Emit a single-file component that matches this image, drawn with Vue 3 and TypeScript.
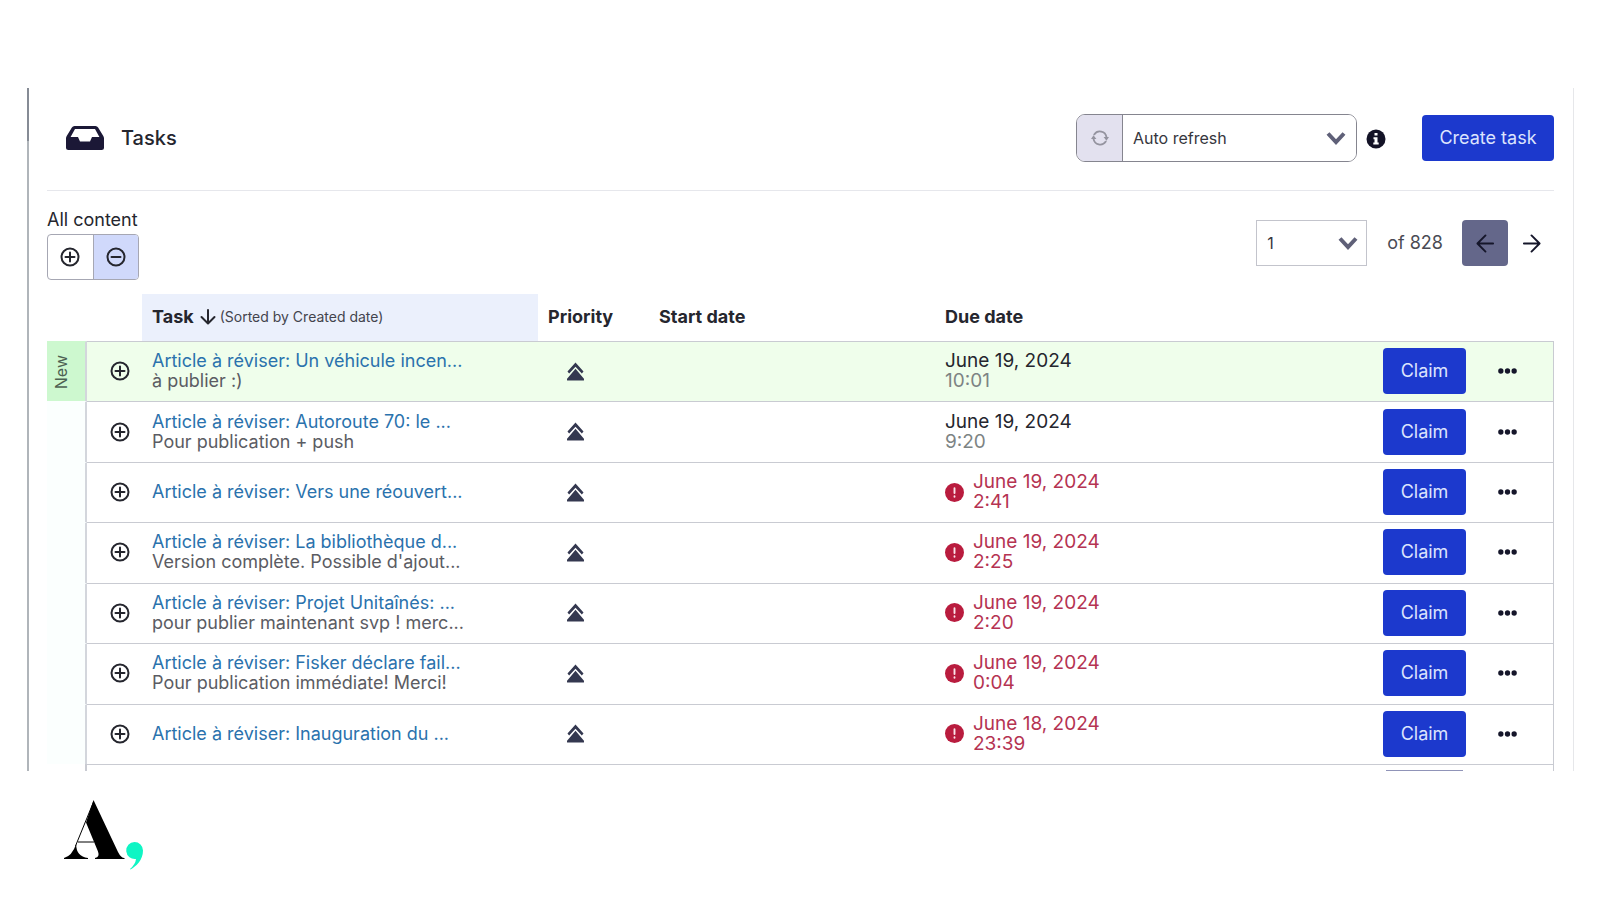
<script setup lang="ts">
import { ref } from 'vue'

interface Task {
  title: string
  note?: string
  date: string
  time: string
  overdue?: boolean
  fresh?: boolean
}

const tasks: Task[] = [
  { title: 'Article à réviser: Un véhicule incen...', note: 'à publier :)', date: 'June 19, 2024', time: '10:01', fresh: true },
  { title: 'Article à réviser: Autoroute 70: le ...', note: 'Pour publication + push', date: 'June 19, 2024', time: '9:20' },
  { title: 'Article à réviser: Vers une réouvert...', date: 'June 19, 2024', time: '2:41', overdue: true },
  { title: 'Article à réviser: La bibliothèque d...', note: "Version complète. Possible d'ajout...", date: 'June 19, 2024', time: '2:25', overdue: true },
  { title: 'Article à réviser: Projet Unitaînés: ...', note: 'pour publier maintenant svp ! merc...', date: 'June 19, 2024', time: '2:20', overdue: true },
  { title: 'Article à réviser: Fisker déclare fail...', note: 'Pour publication immédiate! Merci!', date: 'June 19, 2024', time: '0:04', overdue: true },
  { title: 'Article à réviser: Inauguration du ...', date: 'June 18, 2024', time: '23:39', overdue: true },
]

const refresh = ref('auto')
const page = ref('1')
</script>

<template>
  <main class="screen">
    <section class="panel">
      <header class="head">
        <svg class="inbox" viewBox="0 0 38 24" aria-hidden="true">
          <path fill-rule="evenodd" d="M8.500 0h21a3 3 0 0 1 2.600 1.500l5.200 8.500c.5.9.7 1.700.7 2.600V21.500a2.500 2.500 0 0 1-2.500 2.500h-33A2.500 2.500 0 0 1 0 21.500V12.600c0-.9.2-1.700.7-2.600L5.900 1.500A3 3 0 0 1 8.500 0ZM9 3 4.600 11h7.400l2 4.500h10l2-4.500h7.400L29 3Z" />
        </svg>
        <h1>Tasks</h1>
        <div class="refresh">
          <button type="button" class="refresh-btn" aria-label="Refresh">
            <svg viewBox="0 0 20 20" aria-hidden="true">
              <path class="arc" d="M3.600 6A7.500 7.500 0 0 1 17.200 9M16.400 14A7.500 7.500 0 0 1 2.800 11" />
              <path class="tip" d="M14 9h6l-2.800 4ZM6 11H0l2.800-4Z" />
            </svg>
          </button>
          <div class="pick">
            <select v-model="refresh" aria-label="Refresh mode">
              <option value="auto">Auto refresh</option>
            </select>
            <svg class="chevron" viewBox="0 0 20 14" aria-hidden="true"><path d="M2 2.500l8 8.500 8-8.500" /></svg>
          </div>
        </div>
        <svg class="info" viewBox="0 0 20 20" role="img" aria-label="Information">
          <circle cx="10" cy="10" r="9.500" />
          <path d="M8.500 4h3v2.500h-3zM7.500 8.200h4v5.300h1.200v2H7.300v-2h1.200v-3.300h-1z" />
        </svg>
        <button type="button" class="primary create">Create task</button>
      </header>

      <div class="tools">
        <div class="scope">
          <span id="scope-label">All content</span>
          <div class="toggle" role="group" aria-labelledby="scope-label">
            <button type="button" aria-label="Expand all">
              <svg class="ring" viewBox="0 0 20 20" aria-hidden="true"><circle cx="10" cy="10" r="8.500" /><path d="M10 5.500v9M5.500 10h9" /></svg>
            </button>
            <button type="button" class="on" aria-label="Collapse all">
              <svg class="ring" viewBox="0 0 20 20" aria-hidden="true"><circle cx="10" cy="10" r="8.500" /><path d="M5.500 10h9" /></svg>
            </button>
          </div>
        </div>
        <nav class="pager" aria-label="Pages">
          <div class="pick page">
            <select v-model="page" aria-label="Page">
              <option value="1">1</option>
            </select>
            <svg class="chevron" viewBox="0 0 20 14" aria-hidden="true"><path d="M2 2.500l8 8.500 8-8.500" /></svg>
          </div>
          <span class="total">of 828</span>
          <button type="button" class="prev" aria-label="Previous page">
            <svg viewBox="0 0 20 20" aria-hidden="true"><path d="M18 10H2M10 1.500 1.500 10l8.500 8.500" /></svg>
          </button>
          <button type="button" class="next" aria-label="Next page">
            <svg viewBox="0 0 20 20" aria-hidden="true"><path d="M2 10h16M10 1.500l8.500 8.500-8.500 8.500" /></svg>
          </button>
        </nav>
      </div>

      <table class="grid">
        <colgroup>
          <col class="c-group"><col class="c-expand"><col class="c-task"><col class="c-priority">
          <col class="c-start"><col class="c-due"><col class="c-claim"><col class="c-more">
        </colgroup>
        <thead>
          <tr>
            <td></td>
            <td></td>
            <th scope="col" class="sorted">
              <div class="sort">
                <span>Task</span>
                <svg viewBox="0 0 16 16" aria-hidden="true"><path d="M8 1v13M1.500 8 8 14.500 14.500 8" /></svg>
                <small>(Sorted by Created date)</small>
              </div>
            </th>
            <th scope="col">Priority</th>
            <th scope="col">Start date</th>
            <th scope="col">Due date</th>
            <td></td>
            <td></td>
          </tr>
        </thead>
        <tbody>
          <tr v-for="task in tasks" :key="task.title" :class="{ fresh: task.fresh }">
            <td class="group"><span v-if="task.fresh">New</span></td>
            <td class="expand">
              <button type="button" aria-label="Expand">
                <svg class="ring" viewBox="0 0 20 20" aria-hidden="true"><circle cx="10" cy="10" r="8.500" /><path d="M10 5.500v9M5.500 10h9" /></svg>
              </button>
            </td>
            <td>
              <a href="#">{{ task.title }}</a>
              <p v-if="task.note">{{ task.note }}</p>
            </td>
            <td class="priority">
              <svg viewBox="0 0 18 20" role="img" aria-label="High priority">
                <path d="M9 .5 17.500 10l-1.800 2L9 5 2.300 12 .5 10Z" />
                <path d="M9 7 17.700 17.500a1 1 0 0 1-.8 2H1.100a1 1 0 0 1-.8-2Z" />
              </svg>
            </td>
            <td></td>
            <td>
              <div class="due" :class="{ late: task.overdue }">
                <svg v-if="task.overdue" viewBox="0 0 20 20" role="img" aria-label="Overdue">
                  <circle cx="10" cy="10" r="10" /><path d="M10 5.500v5M10 14v.5" />
                </svg>
                <time><span>{{ task.date }}</span><span class="hour">{{ task.time }}</span></time>
              </div>
            </td>
            <td class="act"><button type="button" class="primary claim">Claim</button></td>
            <td class="more">
              <button type="button" aria-label="More actions">
                <svg viewBox="0 0 20 6" aria-hidden="true"><circle cx="3" cy="3" r="2.800" /><circle cx="10" cy="3" r="2.800" /><circle cx="17" cy="3" r="2.800" /></svg>
              </button>
            </td>
          </tr>
        </tbody>
      </table>
      <div class="next-row"><span></span></div>
    </section>

    <footer>
      <svg class="logo" viewBox="0 0 80 70" role="img" aria-label="Logo">
        <path d="M29.500 0 54 52Q57 58 60.500 58V59H31V58Q36 57 34 51.500L22 22.500Z" />
        <path class="hair" d="M29.500 2 11.500 46M14 42H30" />
        <path d="M0 59V58Q8 56 12.200 44Q12 56.500 24 58V59Z" />
        <path class="mint" d="M70.500 42a8.500 8.500 0 0 1 8.500 8.500C79 60 72 66.500 66.500 69.500L66 69Q71.500 64 72 58.900A8.500 8.500 0 1 1 70.500 42Z" />
      </svg>
    </footer>
  </main>
</template>

<style scoped>
.screen {
  min-height: 100vh;
  box-sizing: border-box;
  padding: 88px 26px 0 27px;
  background: #fff;
  color: #25262e;
  font: 18px/20px Inter, sans-serif;
}
.panel {
  padding: 0 19px 0 20px;
  border-right: 1px solid #e6e7ea;
  background: linear-gradient(#868b95 53px, #b0b5ba 53px) left / 2px 100% no-repeat;
}
button {
  padding: 0;
  border: 0;
  background: none;
  color: inherit;
  font: inherit;
  cursor: pointer;
}
svg { display: block; flex: none; fill: none; stroke-linecap: round; stroke-linejoin: round; }

.head {
  display: flex;
  align-items: center;
  height: 100px;
  padding-bottom: 2px;
  border-bottom: 1px solid #e6e7ec;
}
.inbox { width: 38px; height: 24px; margin-left: 19px; fill: #1b1836; }
h1 { margin: 0 auto 0 17px; font-size: 20px; font-weight: 500; line-height: 24px; }
.refresh {
  display: flex;
  box-sizing: border-box;
  width: 281px;
  height: 48px;
  border: 1px solid #85858f;
  border-radius: 9px;
  overflow: hidden;
}
.refresh-btn {
  display: grid;
  place-items: center;
  width: 46px;
  border-right: 1px solid #85858f;
  background: #e3e1ef;
}
.refresh-btn svg { width: 18px; height: 18px; }
.arc { stroke: #94939f; stroke-width: 2; }
.tip { fill: #94939f; }
.pick { position: relative; flex: 1; }
.pick select {
  appearance: none;
  box-sizing: border-box;
  width: 100%;
  height: 100%;
  padding: 0 40px 0 10px;
  border: 0;
  background: #fff;
  color: #36363d;
  font: 16px/20px Inter, sans-serif;
}
.chevron {
  position: absolute;
  top: 50%;
  right: 10px;
  width: 20px;
  height: 14px;
  margin-top: -7px;
  stroke: #5f6078;
  stroke-width: 4;
  stroke-linecap: butt;
  stroke-linejoin: miter;
  pointer-events: none;
}
.info { width: 20px; height: 20px; margin: 2px 36px 0 9px; }
.info circle { fill: #131226; }
.info path { fill: #fff; }
.primary { height: 46px; border-radius: 4px; background: #1c39cd; color: #dce4fd; }
.create { width: 132px; }

.tools { display: flex; justify-content: space-between; padding: 17px 0 14px; }
.scope { display: flex; flex-direction: column; gap: 2px; line-height: 24px; }
.toggle {
  display: flex;
  box-sizing: border-box;
  width: 92px;
  height: 46px;
  border: 1px solid #a6a7b3;
  border-radius: 4px;
  overflow: hidden;
}
.toggle button { display: grid; flex: 1; place-items: center; }
.toggle .on { border-left: 1px solid #a6a7b3; background: #d0d9fb; }
.ring { width: 20px; height: 20px; stroke: #25262e; stroke-width: 2; }

.pager { display: flex; align-items: center; align-self: flex-start; padding-top: 12px; }
.page { flex: none; box-sizing: border-box; width: 111px; height: 46px; border: 1px solid #c3c4cc; }
.page .chevron { right: 8px; }
.total { margin: 0 19px 0 20px; color: #4a4b54; }
.prev, .next { display: grid; place-items: center; width: 46px; height: 46px; border-radius: 4px; }
.prev { background: #64678a; }
.pager button svg { width: 19px; height: 19px; stroke: #15162a; stroke-width: 2; }

.grid { width: 100%; height: 470px; border-spacing: 0; table-layout: fixed; }
.c-group { width: 40px; }
.c-expand { width: 55px; }
.c-task { width: 396px; }
.c-priority { width: 111px; }
.c-start { width: 286px; }
.c-claim { width: 102px; }
.c-more { width: 78px; }
th, td { padding: 0 0 1px 10px; text-align: left; vertical-align: middle; }
thead th, thead td { box-sizing: border-box; height: 47px; }
th { font-weight: 700; }
.sorted { background: #ebf0fc; }
.sort { display: flex; align-items: center; }
.sort svg { width: 16px; height: 16px; margin: 0 4px 0 6px; stroke: #25262e; stroke-width: 2; }
.sort small { color: #43444d; font-size: 14px; font-weight: 400; }

tbody td { border-top: 1px solid #c9cbd2; }
tbody td:last-child { border-right: 1px solid #c9cbd2; }
tbody .group {
  padding: 0;
  border-top-color: transparent;
  border-right: 2px solid #d3d6dc;
  background: #fbfffe;
}
.group span {
  display: block;
  margin: 0 auto 0 4px;
  color: #4d6152;
  font-size: 16px;
  writing-mode: vertical-rl;
  transform: rotate(180deg);
  text-align: center;
}
.fresh td { background: #effeeb; }
.fresh .group { border-top-color: #cdf8cf; background: #cdf8cf; }
.expand button, .more button { display: block; }
.expand { padding-left: 23px; }
.grid a { display: block; color: #2a72ad; text-decoration: none; white-space: nowrap; }
p { margin: 0; color: #5b5c63; white-space: nowrap; }
.priority { padding-left: 19px; }
tbody .priority { padding-left: 29px; }
.priority svg { width: 17px; height: 19px; fill: #343850; }
.due { display: flex; align-items: center; gap: 9px; font-size: 19px; }
.due svg { width: 19px; height: 19px; fill: #b91c3e; }
.due path { stroke: #fbe3e8; stroke-width: 2; }
.due span { display: block; }
.hour { color: #7d8484; }
.late, .late .hour { color: #b53352; }
.act { padding-left: 9px; }
.claim { display: block; width: 83px; margin: 6px 0; }
.more { padding-left: 22px; }
.more svg { width: 19px; height: 6px; fill: #15162a; }

.next-row {
  display: flex;
  justify-content: flex-end;
  align-items: flex-end;
  height: 6px;
  margin-left: 38px;
  padding-right: 90px;
  border: solid #c9cbd2;
  border-width: 1px 1px 0 2px;
}
.next-row span { width: 77px; height: 1px; background: #9094b8; }

footer { padding: 29px 0 0 37px; }
.logo { width: 80px; height: 70px; fill: #000; }
.logo .hair { fill: none; stroke: #000; stroke-width: 1; stroke-linecap: butt; }
.logo .mint { fill: #0ff5c4; }
</style>

<style>
body { margin: 0; }
</style>
